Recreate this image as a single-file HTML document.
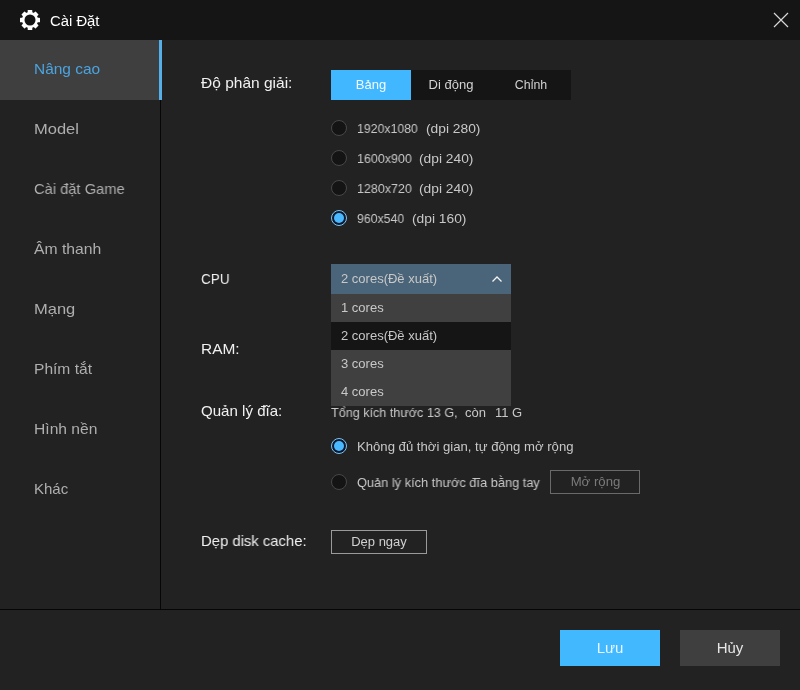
<!DOCTYPE html>
<html><head><meta charset="utf-8">
<style>
*{box-sizing:border-box;margin:0;padding:0}
html,body{width:800px;height:690px;overflow:hidden;background:#222222;font-family:"Liberation Sans",sans-serif;}
.abs{position:absolute;white-space:nowrap;will-change:transform;transform-origin:0 0}
.sx{display:inline-block;transform-origin:50% 50%}
#title{left:0;top:0;width:800px;height:40px;background:#151515}
#title .t{left:49.5px;top:12px;font-size:14.85px;color:#fff;line-height:18px}
#side-sel{left:0;top:40px;width:159px;height:60px;background:#3f3f3f}
#side-bar{left:159px;top:40px;width:3px;height:60px;background:#55b0ea}
#vline{left:160px;top:100px;width:1px;height:509px;background:#060606}
#hline{left:0;top:609px;width:800px;height:1px;background:#060606}
.nav{left:34px;font-size:15px;color:#aeaeae;line-height:18px}
.lbl{left:201px;font-size:15px;color:#f0f0f0;line-height:18px}
#tabs{left:331px;top:70px;width:240px;height:30px;background:#151515}
.tab{top:0;width:80px;height:30px;text-align:center;font-size:13px;line-height:30px;color:#d2d2d2}
.tab.on{background:#40b7ff;color:#f4fbff}
.radio{width:16px;height:16px;border-radius:50%;border:1px solid #484848;background:#141414;left:331px}
.radio.on{border:1px solid #7cc6f4;background:#0b1830}
.radio.on::after{content:"";position:absolute;left:2px;top:2px;width:10px;height:10px;border-radius:50%;background:#4ab8ff}
.rt{left:357px;font-size:13px;color:#c8c8c8;line-height:16px}
#dd{left:331px;top:264px;width:180px;height:30px;background:#4a6579}
.ddi{left:331px;width:180px;height:28px;background:#404040}
.ddi.sel{background:#151515}
.ddt{left:10px;top:6px;font-size:13px;color:#c8c8c8;line-height:16px}
.btn{border:1px solid #9a9a9a;font-size:13px;color:#d0d0d0;text-align:center;line-height:22px;height:24px}
.btn.dis{border-color:#6a6a6a;color:#7a7a7a}
.big{top:630px;width:100px;height:36px;font-size:15px;line-height:36px;text-align:center;color:#fff}
</style></head><body>
<div class="abs" id="title">
  <svg class="abs" style="left:20px;top:10px" width="20" height="20" viewBox="0 0 20 20">
    <g fill="#fff">
      <circle cx="10" cy="10" r="8"/>
      <rect x="7.7" y="0" width="4.6" height="20" rx="0.6"/>
      <rect x="7.7" y="0" width="4.6" height="20" rx="0.6" transform="rotate(45 10 10)"/>
      <rect x="7.7" y="0" width="4.6" height="20" rx="0.6" transform="rotate(90 10 10)"/>
      <rect x="7.7" y="0" width="4.6" height="20" rx="0.6" transform="rotate(135 10 10)"/>
    </g>
    <circle cx="10" cy="10" r="5.5" fill="#151515"/>
  </svg>
  <div class="abs t">Cài Đặt</div>
  <svg class="abs" style="left:773px;top:12px" width="16" height="16" viewBox="0 0 16 16"><path d="M1 1 L15 15 M15 1 L1 15" stroke="#d8d8d8" stroke-width="1.2" fill="none"/></svg>
</div>
<div class="abs" id="side-sel"></div>
<div class="abs" id="side-bar"></div>
<div class="abs" id="vline"></div>
<div class="abs" id="hline"></div>

<div class="abs nav" style="top:60px;color:#4ba4e0;transform:scaleX(1.031)">Nâng cao</div>
<div class="abs nav" style="top:120px;transform:scaleX(1.1)">Model</div>
<div class="abs nav" style="top:180px;transform:scaleX(0.98)">Cài đặt Game</div>
<div class="abs nav" style="top:240px;transform:scaleX(1.048)">Âm thanh</div>
<div class="abs nav" style="top:300px;transform:scaleX(1.1)">Mạng</div>
<div class="abs nav" style="top:360px;transform:scaleX(1.038)">Phím tắt</div>
<div class="abs nav" style="top:420px;transform:scaleX(1.042)">Hình nền</div>
<div class="abs nav" style="top:480px;transform:scaleX(0.988)">Khác</div>

<div class="abs lbl" style="top:74px;transform:scaleX(1.034)">Độ phân giải:</div>
<div class="abs lbl" style="top:270px;transform:scaleX(0.907)">CPU</div>
<div class="abs lbl" style="top:340px;transform:scaleX(1.03)">RAM:</div>
<div class="abs lbl" style="top:402px;transform:scaleX(1.005)">Quản lý đĩa:</div>
<div class="abs lbl" style="top:532px;transform:scaleX(0.99)">Dẹp disk cache:</div>

<div class="abs" id="tabs">
  <div class="abs tab on" style="left:0">Bảng</div>
  <div class="abs tab" style="left:80px">Di động</div>
  <div class="abs tab" style="left:160px"><span class="sx" style="transform:scaleX(0.95)">Chỉnh</span></div>
</div>

<div class="abs radio" style="top:120px"></div><div class="abs rt" style="top:121px;transform:scaleX(0.945)">1920x1080</div><div class="abs rt" style="left:426px;top:121px;transform:scaleX(1.06)">(dpi 280)</div>
<div class="abs radio" style="top:150px"></div><div class="abs rt" style="top:151px;transform:scaleX(0.958)">1600x900</div><div class="abs rt" style="left:419px;top:151px;transform:scaleX(1.06)">(dpi 240)</div>
<div class="abs radio" style="top:180px"></div><div class="abs rt" style="top:181px;transform:scaleX(0.958)">1280x720</div><div class="abs rt" style="left:419px;top:181px;transform:scaleX(1.06)">(dpi 240)</div>
<div class="abs radio on" style="top:210px"></div><div class="abs rt" style="top:211px;transform:scaleX(0.945)">960x540</div><div class="abs rt" style="left:412px;top:211px;transform:scaleX(1.06)">(dpi 160)</div>

<div class="abs" id="dd"><div class="abs ddt" style="top:7px">2 cores(Đề xuất)</div>
  <svg class="abs" style="left:160px;top:11px" width="12" height="8" viewBox="0 0 12 8"><path d="M1.5 6.5 L6 2 L10.5 6.5" stroke="#f4f4f4" stroke-width="1.25" fill="none"/></svg>
</div>
<div class="abs ddi" style="top:294px"><div class="abs ddt">1 cores</div></div>
<div class="abs ddi sel" style="top:322px"><div class="abs ddt">2 cores(Đề xuất)</div></div>
<div class="abs ddi" style="top:350px"><div class="abs ddt">3 cores</div></div>
<div class="abs ddi" style="top:378px"><div class="abs ddt">4 cores</div></div>

<div class="abs rt" style="left:331px;top:405px;transform:scaleX(0.969)">Tổng kích thước 13 G,</div><div class="abs rt" style="left:465px;top:405px;transform:scaleX(0.985)">còn</div><div class="abs rt" style="left:495px;top:405px;transform:scaleX(0.985)">11 G</div>
<div class="abs radio on" style="top:438px"></div><div class="abs rt" style="top:439px;transform:scaleX(1.01)">Không đủ thời gian, tự động mở rộng</div>
<div class="abs radio" style="top:474px"></div><div class="abs rt" style="top:475px;transform:scaleX(0.985)">Quản lý kích thước đĩa bằng tay</div>
<div class="abs btn dis" style="left:550px;top:470px;width:90px"><span class="sx" style="transform:scaleX(1.015)">Mở rộng</span></div>
<div class="abs btn" style="left:331px;top:530px;width:96px">Dẹp ngay</div>

<div class="abs big" style="left:560px;background:#42b8ff;color:#eaf7ff">Lưu</div>
<div class="abs big" style="left:680px;background:#3f3f3f;color:#e6e6e6">Hủy</div>
</body></html>
